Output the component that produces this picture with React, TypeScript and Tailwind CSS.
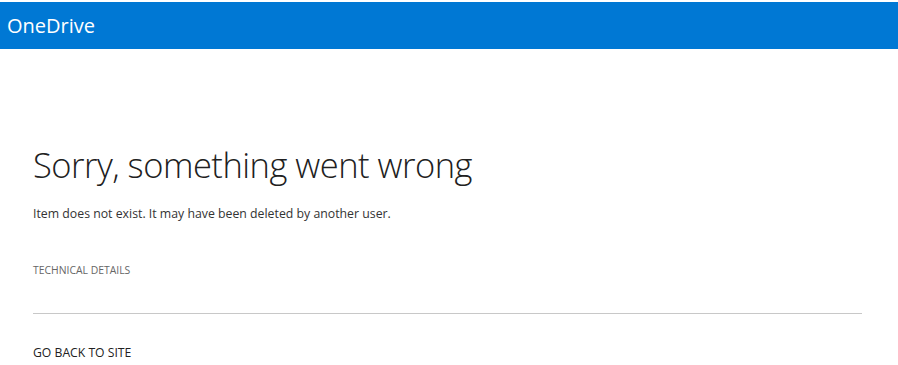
export default function App() {
  return (
    <div className="min-h-[365px] bg-white font-['Open_Sans',sans-serif] text-[#333333]">
      <div className="pt-[2px]">
        <header className="flex h-[47px] items-center bg-[#0078d4] px-[7px]">
          <span className="text-[20px] leading-none text-white">OneDrive</span>
        </header>
      </div>

      <main className="pl-[33px] pr-[36px] pt-[96px]">
        <h1 className="text-[34.5px] font-light leading-[40px] tracking-[-0.5px] text-[#212121]">
          Sorry, something went wrong
        </h1>
        <p className="mt-[20px] text-[12.3px] leading-[18px]">
          Item does not exist. It may have been deleted by another user.
        </p>
        <div className="mt-[40px] text-[10.4px] uppercase leading-[14px] text-[#666666]">Technical Details</div>
        <div className="mt-[36px] border-t border-[#c8c8c8]" />
        <a href="#" className="mt-[30px] block text-[12.2px] uppercase leading-[18px] text-[#212121]">
          Go back to site
        </a>
      </main>
    </div>
  );
}
